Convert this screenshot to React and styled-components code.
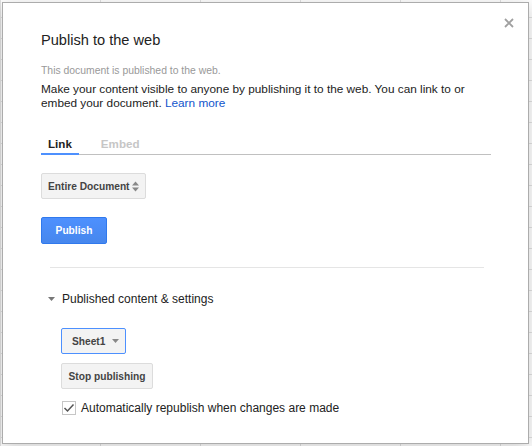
import React from "react";
import styled, { createGlobalStyle } from "styled-components";

const GlobalStyle = createGlobalStyle`
  html, body {
    margin: 0;
    padding: 0;
  }
  body {
    width: 532px;
    height: 446px;
    overflow: hidden;
    font-family: "Liberation Sans", Arial, sans-serif;
    background-color: #fff;
    background-image:
      linear-gradient(to right, #e2e2e2 1px, transparent 1px),
      linear-gradient(to bottom, #e2e2e2 1px, transparent 1px);
    background-size: 100px 21px;
    background-position: 0 -4px;
  }
`;

const Page = styled.div`
  padding: 2px 4px 3px 2px;
`;

const Dialog = styled.div`
  position: relative;
  box-sizing: border-box;
  width: 527px;
  height: 442px;
  background: #fff;
  border: 1px solid #acacac;
  box-shadow: 0 4px 16px rgba(0, 0, 0, 0.2);
  padding: 28px 20px 0 38px;
  display: flex;
  flex-direction: column;
  color: #222;
`;

const Close = styled.button`
  position: absolute;
  top: 12px;
  right: 11px;
  width: 16px;
  height: 16px;
  padding: 0;
  border: 0;
  background: transparent;
  cursor: pointer;
  display: flex;
  align-items: center;
  justify-content: center;
`;

const Title = styled.h1`
  margin: 0;
  font-size: 14.6px;
  font-weight: normal;
  line-height: 18px;
  color: #222;
`;

const Note = styled.div`
  margin-top: 16px;
  font-size: 10.4px;
  line-height: 12px;
  color: #999;
`;

const Text = styled.p`
  margin: 5px 0 0;
  font-size: 11.8px;
  line-height: 14px;
  color: #222;
  max-width: 450px;
`;

const Link = styled.a`
  color: #15c;
  text-decoration: none;
`;

const Tabs = styled.div`
  margin-top: 27px;
  display: flex;
  border-bottom: 1px solid #c0c0c0;
  width: 450px;
`;

const Tab = styled.div`
  padding: 0 7px 2px;
  margin-right: 15px;
  margin-bottom: -1px;
  font-size: 11.6px;
  font-weight: bold;
  line-height: 14px;
  color: ${(p) => (p.active ? "#222" : "#c6c6c6")};
  border-bottom: 2px solid ${(p) => (p.active ? "#4d90fe" : "transparent")};
`;

const Buttons = styled.div`
  display: flex;
  flex-direction: column;
  align-items: flex-start;
  gap: ${(p) => p.gap || 0}px;
  margin-top: ${(p) => p.top || 0}px;
  padding-left: ${(p) => p.indent || 0}px;
`;

const GrayButton = styled.div`
  box-sizing: border-box;
  height: 26px;
  width: ${(p) => p.w}px;
  display: inline-flex;
  align-items: center;
  justify-content: ${(p) => (p.center ? "center" : "space-between")};
  padding: 0 ${(p) => p.right || 6}px 0 ${(p) => p.left || 6}px;
  white-space: nowrap;
  font-size: 10.2px;
  font-weight: bold;
  color: #444;
  background: #f3f3f3;
  border: 1px solid ${(p) => (p.focused ? "#4d90fe" : "#dcdcdc")};
  border-radius: 2px;
`;

const BlueButton = styled.div`
  box-sizing: border-box;
  height: 27px;
  width: 66px;
  display: inline-flex;
  align-items: center;
  justify-content: center;
  font-size: 10.2px;
  font-weight: bold;
  color: #fff;
  background: linear-gradient(#4d90fe, #4787ed);
  border: 1px solid #3079ed;
  border-radius: 2px;
`;

const Divider = styled.hr`
  margin: 23px 24px 0 9px;
  border: 0;
  border-top: 1px solid #e5e5e5;
  height: 0;
`;

const Section = styled.div`
  margin-top: 23px;
  display: flex;
  align-items: center;
  gap: 7px;
  padding-left: 7px;
  font-size: 12px;
  line-height: 16px;
  color: #222;
`;

const CheckRow = styled.label`
  margin-top: 12px;
  padding-left: 21px;
  display: flex;
  align-items: center;
  gap: 5px;
  font-size: 12px;
  line-height: 14px;
  color: #222;
`;

const Box = styled.span`
  box-sizing: border-box;
  width: 14px;
  height: 14px;
  border: 1px solid #c6c6c6;
  background: #fff;
  display: flex;
  align-items: center;
  justify-content: center;
`;

export default function App() {
  return (
    <>
      <GlobalStyle />
      <Page>
        <Dialog>
          <Close aria-label="Close">
            <svg width="10" height="10" viewBox="0 0 10 10">
              <path d="M1 1L9 9M9 1L1 9" stroke="#a0a0a0" strokeWidth="1.8" />
            </svg>
          </Close>
          <Title>Publish to the web</Title>
          <Note>This document is published to the web.</Note>
          <Text>
            Make your content visible to anyone by publishing it to the web. You
            can link to or embed your document. <Link href="#">Learn more</Link>
          </Text>
          <Tabs>
            <Tab active>Link</Tab>
            <Tab>Embed</Tab>
          </Tabs>
          <Buttons top={18} gap={18}>
            <GrayButton w={105} left={6} right={6}>
              Entire Document
              <svg width="7" height="11" viewBox="0 0 7 11">
                <path d="M0 4.5L3.5 0.5L7 4.5Z M0 6.5L3.5 10.5L7 6.5Z" fill="#888" />
              </svg>
            </GrayButton>
            <BlueButton>Publish</BlueButton>
          </Buttons>
          <Divider />
          <Section>
            <svg width="7" height="4" viewBox="0 0 7 4">
              <path d="M0 0H7L3.5 4Z" fill="#777" />
            </svg>
            Published content &amp; settings
          </Section>
          <Buttons top={21} gap={9} indent={20}>
            <GrayButton focused w={65} left={10} right={6}>
              Sheet1
              <svg width="7" height="4" viewBox="0 0 7 4">
                <path d="M0 0H7L3.5 4Z" fill="#888" />
              </svg>
            </GrayButton>
            <GrayButton w={92} center>Stop publishing</GrayButton>
          </Buttons>
          <CheckRow>
            <Box>
              <svg width="12" height="10" viewBox="0 0 12 10">
                <path d="M1.5 5L4.5 8L10.5 1.5" stroke="#555" strokeWidth="1.5" fill="none" />
              </svg>
            </Box>
            Automatically republish when changes are made
          </CheckRow>
        </Dialog>
      </Page>
    </>
  );
}
